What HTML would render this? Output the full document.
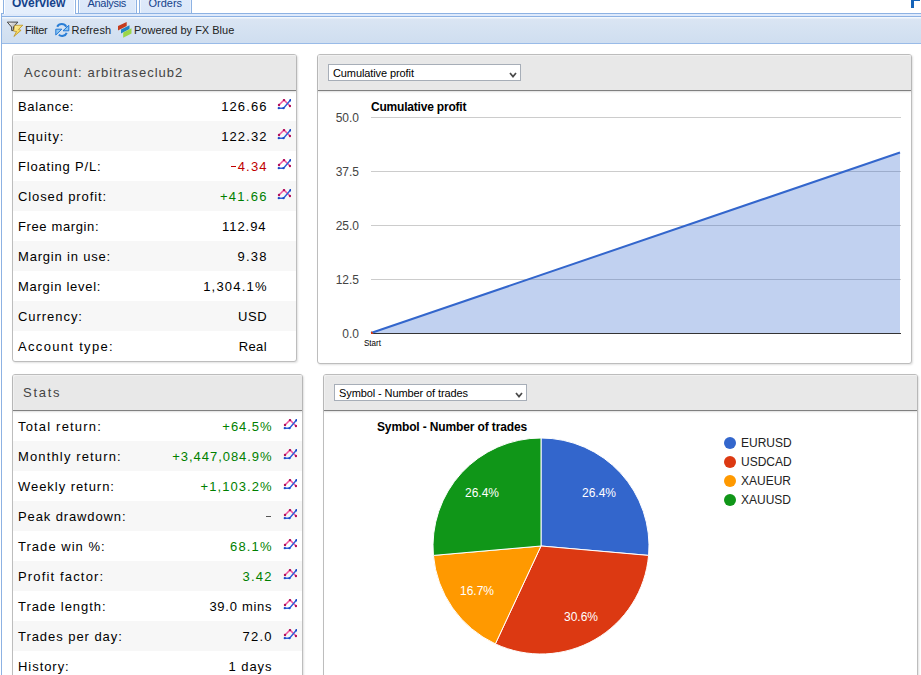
<!DOCTYPE html>
<html><head><meta charset="utf-8">
<style>
*{box-sizing:border-box;margin:0;padding:0}
html,body{width:921px;height:675px;overflow:hidden;background:#fff;position:relative;font-family:"Liberation Sans",sans-serif}
.abs{position:absolute}
.tab{position:absolute;top:-10px;height:24px;border:1px solid #8db2e3;border-top:none;background:linear-gradient(#e0ebfb,#dae7f9);box-shadow:inset 1px 0 0 #f0f6fe,inset -1px 0 0 #e8f0fc;font-size:11px;color:#15428b}
.tab span{position:absolute;top:7px;white-space:nowrap}
.panel{position:absolute;border:1px solid #bdbdbd;border-radius:3px;background:#fff;box-shadow:1px 1px 2px rgba(0,0,0,.12)}
.ph{position:absolute;left:0;right:0;top:0;height:36px;background:#e8e8e8;border-bottom:1px solid #808080;border-radius:2px 2px 0 0;box-shadow:0 1px 2px rgba(0,0,0,.13), inset 1px 1px 0 #f0f0f0}
.ph .t{position:absolute;left:11px;top:10px;font-size:13px;letter-spacing:.95px;color:#444;white-space:nowrap}
.row{position:absolute;left:0;right:0;height:30px;font-size:13px;letter-spacing:.95px;color:#000;white-space:nowrap}
.row.g{background:#f7f7f7}
.row .l{position:absolute;left:5px;top:8px}
.row .v{position:absolute;top:8px;text-align:right}
.pos{color:#007f00}
.neg{color:#c00000}
.ic{position:absolute;top:8px;width:14px;height:12px}
.sel{position:absolute;height:17px;background:#fff;border:1px solid #a7aeb8;font-size:11px;color:#000;white-space:nowrap}
.sel span{position:absolute;left:4px;top:2px;letter-spacing:-.1px}
.sel svg{position:absolute;right:3px;top:7px}
</style></head><body>

<!-- tabs -->
<div class="abs" style="left:1px;top:13px;width:920px;height:1px;background:#8db2e3"></div>
<div class="abs" style="left:1px;top:14px;width:920px;height:2px;background:#dfeafb"></div>
<div class="abs" style="left:1px;top:16px;width:920px;height:1px;background:#8db2e3"></div>
<div class="tab" style="left:3px;width:73px;height:24px;border-bottom:none;z-index:2;background:linear-gradient(#e8f0fc,#e4eefc);box-shadow:inset 1px 0 0 #fff,inset -1px 0 0 #fff"><span style="left:8px;font-weight:bold;font-size:12px;top:6px">Overview</span></div>
<div class="tab" style="left:78px;width:59px"><span style="left:8.5px;letter-spacing:-.3px">Analysis</span></div>
<div class="tab" style="left:139px;width:53px"><span style="left:8.5px">Orders</span></div>
<div class="abs" style="left:911px;top:0;width:3px;height:8px;background:#1563b8"></div>
<div class="abs" style="left:911px;top:0;width:9px;height:1px;background:#1563b8"></div>

<!-- toolbar -->
<div class="abs" style="left:1px;top:17px;width:920px;height:27px;background:linear-gradient(#f3f7fc 0px,#f3f7fc 1px,#dae5f3 2px,#cfdef0 26px);border-bottom:1px solid #99bbe8"></div>
<div class="abs" style="left:1px;top:13px;width:1px;height:662px;background:#8db2e3"></div>

<!-- toolbar items -->
<svg class="abs" style="left:7px;top:21px" width="17" height="17" viewBox="0 0 17 17">
  <defs><linearGradient id="fg" x1="0" y1="0" x2="1" y2="1"><stop offset="0" stop-color="#ffffff"/><stop offset="1" stop-color="#8a8a8a"/></linearGradient>
  <linearGradient id="bg1" x1="0" y1="0" x2="1" y2="1"><stop offset="0" stop-color="#fff6b0"/><stop offset="1" stop-color="#f0c020"/></linearGradient></defs>
  <path d="M0.3 1.1 L10.9 1.1 L6.5 6 L6.5 9.6 L4.7 9.6 L4.5 6 Z" fill="url(#fg)" stroke="#3a3a3a" stroke-width="0.9" stroke-linejoin="round"/>
  <path d="M7.8 4.4 L15.8 4.2 L11.5 8.5 L14.1 9.3 L6.9 15.5 L9.5 10.5 L6.6 10.1 Z" fill="url(#bg1)" stroke="#b88a10" stroke-width="0.7" stroke-linejoin="round"/>
</svg>
<div class="abs" style="left:25px;top:24px;font-size:11px;color:#222;letter-spacing:-.35px">Filter</div>

<svg class="abs" style="left:54px;top:22px" width="16" height="16" viewBox="0 0 16 16">
  <path d="M3.2 4.8 A5.2 5.2 0 0 1 12.3 4.8" fill="none" stroke="#2a7ed6" stroke-width="2"/>
  <path d="M14.8 3.3 L14.8 8.8 L9 8.8 Z" fill="#8ac6f4" stroke="#2277d4" stroke-width="1" stroke-linejoin="round"/>
  <path d="M12.7 10.8 A5 5 0 0 1 4.8 12.8" fill="none" stroke="#2a7ed6" stroke-width="2"/>
  <path d="M1.8 7.2 L7.8 7.2 L1.8 13 Z" fill="#8ac6f4" stroke="#2277d4" stroke-width="1" stroke-linejoin="round"/>
</svg>
<div class="abs" style="left:72px;top:24px;font-size:11px;color:#222;letter-spacing:.2px;margin-left:-.5px">Refresh</div>

<svg class="abs" style="left:116px;top:21px" width="17" height="18" viewBox="116 21 17 18">
  <path d="M118 26 L126.7 22 L126.7 26 L118 30.5 Z" fill="#c43c1e"/>
  <path d="M121 29.4 L129.5 25.3 L129.5 29 L121 33.6 Z" fill="#1f84c4"/>
  <path d="M123.2 32.6 L131.5 28.3 L131.5 33.6 L123.2 37.7 Z" fill="#9ad648"/>
</svg>
<div class="abs" style="left:134px;top:24px;font-size:11px;color:#222">Powered by FX Blue</div>

<!-- account panel -->
<div class="panel" style="left:12px;top:54px;width:285px;height:308px">
  <div class="ph"><div class="t" style="letter-spacing:1.02px">Account: arbitraseclub2</div></div>
  <div class="row" style="top:36px"><span class="l" style="letter-spacing:0.693px">Balance:</span><span class="v" style="right:28.32px;letter-spacing:1.130px">126.66</span><svg class="ic" style="right:5px" width="14" height="12" viewBox="0 0 14 12"><polyline points="2,6 7,1 13,7" fill="none" stroke="#f0559f" stroke-width="1.5"/><circle cx="2" cy="6" r="1.2" fill="#b0105a"/><circle cx="7" cy="1.1" r="1.2" fill="#b0105a"/><circle cx="13" cy="7" r="1.2" fill="#b0105a"/><polyline points="1.7,9.2 6.5,9.2 13.5,1" fill="none" stroke="#2d5fd8" stroke-width="1.4"/><circle cx="1.8" cy="9.2" r="1.15" fill="#1a48c8"/><circle cx="6.5" cy="9.2" r="1.15" fill="#1a48c8"/><circle cx="13.5" cy="1.2" r="1.2" fill="#1a48c8"/></svg></div>
  <div class="row g" style="top:66px"><span class="l" style="letter-spacing:0.950px">Equity:</span><span class="v" style="right:28.32px;letter-spacing:1.130px">122.32</span><svg class="ic" style="right:5px" width="14" height="12" viewBox="0 0 14 12"><polyline points="2,6 7,1 13,7" fill="none" stroke="#f0559f" stroke-width="1.5"/><circle cx="2" cy="6" r="1.2" fill="#b0105a"/><circle cx="7" cy="1.1" r="1.2" fill="#b0105a"/><circle cx="13" cy="7" r="1.2" fill="#b0105a"/><polyline points="1.7,9.2 6.5,9.2 13.5,1" fill="none" stroke="#2d5fd8" stroke-width="1.4"/><circle cx="1.8" cy="9.2" r="1.15" fill="#1a48c8"/><circle cx="6.5" cy="9.2" r="1.15" fill="#1a48c8"/><circle cx="13.5" cy="1.2" r="1.2" fill="#1a48c8"/></svg></div>
  <div class="row" style="top:96px"><span class="l" style="letter-spacing:0.800px">Floating P/L:</span><span class="v neg" style="right:28.28px;letter-spacing:1.175px"><i style='display:inline-block;width:5px;height:1px;background:currentColor;vertical-align:4px;margin-right:1.5px'></i>4.34</span><svg class="ic" style="right:5px" width="14" height="12" viewBox="0 0 14 12"><polyline points="2,6 7,1 13,7" fill="none" stroke="#f0559f" stroke-width="1.5"/><circle cx="2" cy="6" r="1.2" fill="#b0105a"/><circle cx="7" cy="1.1" r="1.2" fill="#b0105a"/><circle cx="13" cy="7" r="1.2" fill="#b0105a"/><polyline points="1.7,9.2 6.5,9.2 13.5,1" fill="none" stroke="#2d5fd8" stroke-width="1.4"/><circle cx="1.8" cy="9.2" r="1.15" fill="#1a48c8"/><circle cx="6.5" cy="9.2" r="1.15" fill="#1a48c8"/><circle cx="13.5" cy="1.2" r="1.2" fill="#1a48c8"/></svg></div>
  <div class="row g" style="top:126px"><span class="l" style="letter-spacing:0.881px">Closed profit:</span><span class="v pos" style="right:28.14px;letter-spacing:1.310px">+41.66</span><svg class="ic" style="right:5px" width="14" height="12" viewBox="0 0 14 12"><polyline points="2,6 7,1 13,7" fill="none" stroke="#f0559f" stroke-width="1.5"/><circle cx="2" cy="6" r="1.2" fill="#b0105a"/><circle cx="7" cy="1.1" r="1.2" fill="#b0105a"/><circle cx="13" cy="7" r="1.2" fill="#b0105a"/><polyline points="1.7,9.2 6.5,9.2 13.5,1" fill="none" stroke="#2d5fd8" stroke-width="1.4"/><circle cx="1.8" cy="9.2" r="1.15" fill="#1a48c8"/><circle cx="6.5" cy="9.2" r="1.15" fill="#1a48c8"/><circle cx="13.5" cy="1.2" r="1.2" fill="#1a48c8"/></svg></div>
  <div class="row" style="top:156px"><span class="l" style="letter-spacing:0.623px">Free margin:</span><span class="v" style="right:29.50px;letter-spacing:0.950px">112.94</span></div>
  <div class="row g" style="top:186px"><span class="l" style="letter-spacing:0.812px">Margin in use:</span><span class="v" style="right:28.20px;letter-spacing:1.250px">9.38</span></div>
  <div class="row" style="top:216px"><span class="l" style="letter-spacing:0.725px">Margin level:</span><span class="v" style="right:28.24px;letter-spacing:1.207px">1,304.1%</span></div>
  <div class="row g" style="top:246px"><span class="l" style="letter-spacing:0.950px">Currency:</span><span class="v" style="right:28.95px;letter-spacing:0.500px">USD</span></div>
  <div class="row" style="top:276px"><span class="l" style="letter-spacing:1.325px">Account type:</span><span class="v" style="right:29.10px;letter-spacing:0.350px">Real</span></div>
</div>

<!-- stats panel -->
<div class="panel" style="left:12px;top:374px;width:291px;height:320px">
  <div class="ph"><div class="t" style="left:10px;letter-spacing:1.75px">Stats</div></div>
  <div class="row" style="top:36px"><span class="l" style="letter-spacing:1.175px">Total return:</span><span class="v pos" style="right:29.50px;letter-spacing:0.950px">+64.5%</span><svg class="ic" style="right:5px" width="14" height="12" viewBox="0 0 14 12"><polyline points="2,6 7,1 13,7" fill="none" stroke="#f0559f" stroke-width="1.5"/><circle cx="2" cy="6" r="1.2" fill="#b0105a"/><circle cx="7" cy="1.1" r="1.2" fill="#b0105a"/><circle cx="13" cy="7" r="1.2" fill="#b0105a"/><polyline points="1.7,9.2 6.5,9.2 13.5,1" fill="none" stroke="#2d5fd8" stroke-width="1.4"/><circle cx="1.8" cy="9.2" r="1.15" fill="#1a48c8"/><circle cx="6.5" cy="9.2" r="1.15" fill="#1a48c8"/><circle cx="13.5" cy="1.2" r="1.2" fill="#1a48c8"/></svg></div>
  <div class="row g" style="top:66px"><span class="l" style="letter-spacing:1.143px">Monthly return:</span><span class="v pos" style="right:29.50px;letter-spacing:0.950px">+3,447,084.9%</span><svg class="ic" style="right:5px" width="14" height="12" viewBox="0 0 14 12"><polyline points="2,6 7,1 13,7" fill="none" stroke="#f0559f" stroke-width="1.5"/><circle cx="2" cy="6" r="1.2" fill="#b0105a"/><circle cx="7" cy="1.1" r="1.2" fill="#b0105a"/><circle cx="13" cy="7" r="1.2" fill="#b0105a"/><polyline points="1.7,9.2 6.5,9.2 13.5,1" fill="none" stroke="#2d5fd8" stroke-width="1.4"/><circle cx="1.8" cy="9.2" r="1.15" fill="#1a48c8"/><circle cx="6.5" cy="9.2" r="1.15" fill="#1a48c8"/><circle cx="13.5" cy="1.2" r="1.2" fill="#1a48c8"/></svg></div>
  <div class="row" style="top:96px"><span class="l" style="letter-spacing:0.950px">Weekly return:</span><span class="v pos" style="right:29.39px;letter-spacing:1.062px">+1,103.2%</span><svg class="ic" style="right:5px" width="14" height="12" viewBox="0 0 14 12"><polyline points="2,6 7,1 13,7" fill="none" stroke="#f0559f" stroke-width="1.5"/><circle cx="2" cy="6" r="1.2" fill="#b0105a"/><circle cx="7" cy="1.1" r="1.2" fill="#b0105a"/><circle cx="13" cy="7" r="1.2" fill="#b0105a"/><polyline points="1.7,9.2 6.5,9.2 13.5,1" fill="none" stroke="#2d5fd8" stroke-width="1.4"/><circle cx="1.8" cy="9.2" r="1.15" fill="#1a48c8"/><circle cx="6.5" cy="9.2" r="1.15" fill="#1a48c8"/><circle cx="13.5" cy="1.2" r="1.2" fill="#1a48c8"/></svg></div>
  <div class="row g" style="top:126px"><span class="l" style="letter-spacing:0.881px">Peak drawdown:</span><i style='position:absolute;right:31.5px;top:15px;width:5px;height:1px;background:#555'></i><svg class="ic" style="right:5px" width="14" height="12" viewBox="0 0 14 12"><polyline points="2,6 7,1 13,7" fill="none" stroke="#f0559f" stroke-width="1.5"/><circle cx="2" cy="6" r="1.2" fill="#b0105a"/><circle cx="7" cy="1.1" r="1.2" fill="#b0105a"/><circle cx="13" cy="7" r="1.2" fill="#b0105a"/><polyline points="1.7,9.2 6.5,9.2 13.5,1" fill="none" stroke="#2d5fd8" stroke-width="1.4"/><circle cx="1.8" cy="9.2" r="1.15" fill="#1a48c8"/><circle cx="6.5" cy="9.2" r="1.15" fill="#1a48c8"/><circle cx="13.5" cy="1.2" r="1.2" fill="#1a48c8"/></svg></div>
  <div class="row" style="top:156px"><span class="l" style="letter-spacing:1.032px">Trade win %:</span><span class="v pos" style="right:29.28px;letter-spacing:1.175px">68.1%</span><svg class="ic" style="right:5px" width="14" height="12" viewBox="0 0 14 12"><polyline points="2,6 7,1 13,7" fill="none" stroke="#f0559f" stroke-width="1.5"/><circle cx="2" cy="6" r="1.2" fill="#b0105a"/><circle cx="7" cy="1.1" r="1.2" fill="#b0105a"/><circle cx="13" cy="7" r="1.2" fill="#b0105a"/><polyline points="1.7,9.2 6.5,9.2 13.5,1" fill="none" stroke="#2d5fd8" stroke-width="1.4"/><circle cx="1.8" cy="9.2" r="1.15" fill="#1a48c8"/><circle cx="6.5" cy="9.2" r="1.15" fill="#1a48c8"/><circle cx="13.5" cy="1.2" r="1.2" fill="#1a48c8"/></svg></div>
  <div class="row g" style="top:186px"><span class="l" style="letter-spacing:1.157px">Profit factor:</span><span class="v pos" style="right:29.20px;letter-spacing:1.250px">3.42</span><svg class="ic" style="right:5px" width="14" height="12" viewBox="0 0 14 12"><polyline points="2,6 7,1 13,7" fill="none" stroke="#f0559f" stroke-width="1.5"/><circle cx="2" cy="6" r="1.2" fill="#b0105a"/><circle cx="7" cy="1.1" r="1.2" fill="#b0105a"/><circle cx="13" cy="7" r="1.2" fill="#b0105a"/><polyline points="1.7,9.2 6.5,9.2 13.5,1" fill="none" stroke="#2d5fd8" stroke-width="1.4"/><circle cx="1.8" cy="9.2" r="1.15" fill="#1a48c8"/><circle cx="6.5" cy="9.2" r="1.15" fill="#1a48c8"/><circle cx="13.5" cy="1.2" r="1.2" fill="#1a48c8"/></svg></div>
  <div class="row" style="top:216px"><span class="l" style="letter-spacing:0.950px">Trade length:</span><span class="v" style="right:29.72px;letter-spacing:0.725px">39.0 mins</span><svg class="ic" style="right:5px" width="14" height="12" viewBox="0 0 14 12"><polyline points="2,6 7,1 13,7" fill="none" stroke="#f0559f" stroke-width="1.5"/><circle cx="2" cy="6" r="1.2" fill="#b0105a"/><circle cx="7" cy="1.1" r="1.2" fill="#b0105a"/><circle cx="13" cy="7" r="1.2" fill="#b0105a"/><polyline points="1.7,9.2 6.5,9.2 13.5,1" fill="none" stroke="#2d5fd8" stroke-width="1.4"/><circle cx="1.8" cy="9.2" r="1.15" fill="#1a48c8"/><circle cx="6.5" cy="9.2" r="1.15" fill="#1a48c8"/><circle cx="13.5" cy="1.2" r="1.2" fill="#1a48c8"/></svg></div>
  <div class="row g" style="top:246px"><span class="l" style="letter-spacing:0.950px">Trades per day:</span><span class="v" style="right:29.20px;letter-spacing:1.250px">72.0</span><svg class="ic" style="right:5px" width="14" height="12" viewBox="0 0 14 12"><polyline points="2,6 7,1 13,7" fill="none" stroke="#f0559f" stroke-width="1.5"/><circle cx="2" cy="6" r="1.2" fill="#b0105a"/><circle cx="7" cy="1.1" r="1.2" fill="#b0105a"/><circle cx="13" cy="7" r="1.2" fill="#b0105a"/><polyline points="1.7,9.2 6.5,9.2 13.5,1" fill="none" stroke="#2d5fd8" stroke-width="1.4"/><circle cx="1.8" cy="9.2" r="1.15" fill="#1a48c8"/><circle cx="6.5" cy="9.2" r="1.15" fill="#1a48c8"/><circle cx="13.5" cy="1.2" r="1.2" fill="#1a48c8"/></svg></div>
  <div class="row" style="top:276px"><span class="l" style="letter-spacing:0.950px">History:</span><span class="v" style="right:29.50px;letter-spacing:0.950px">1 days</span></div>
</div>

<!-- chart panel -->
<div class="panel" style="left:317px;top:54px;width:595px;height:310px">
  <div class="ph"><div class="sel" style="left:10px;top:9px;width:193px"><span>Cumulative profit</span><svg width="8" height="6" viewBox="0 0 8 6"><path d="M1 1 L4 4.6 L7 1" fill="none" stroke="#4a4a4a" stroke-width="1.7"/></svg></div></div>
</div>
<svg class="abs" style="left:0;top:0" width="921" height="675" viewBox="0 0 921 675">
<text x="371" y="111" font-family="Liberation Sans" font-size="12" font-weight="bold" fill="#000" letter-spacing="-0.2">Cumulative profit</text>
<rect x="371" y="117" width="530" height="1" fill="#cccccc"/>
<text x="359" y="122" text-anchor="end" font-family="Liberation Sans" font-size="12" fill="#444">50.0</text>
<rect x="371" y="171" width="530" height="1" fill="#cccccc"/>
<text x="359" y="176" text-anchor="end" font-family="Liberation Sans" font-size="12" fill="#444">37.5</text>
<rect x="371" y="225" width="530" height="1" fill="#cccccc"/>
<text x="359" y="230" text-anchor="end" font-family="Liberation Sans" font-size="12" fill="#444">25.0</text>
<rect x="371" y="279" width="530" height="1" fill="#cccccc"/>
<text x="359" y="284" text-anchor="end" font-family="Liberation Sans" font-size="12" fill="#444">12.5</text>
<text x="359" y="338" text-anchor="end" font-family="Liberation Sans" font-size="12" fill="#444">0.0</text>
<polygon points="371,333 900,152.5 900,333" fill="#3366cc" fill-opacity="0.3"/>
<rect x="371" y="333" width="530" height="1" fill="#333"/>
<line x1="371" y1="333" x2="900" y2="152.5" stroke="#3366cc" stroke-width="2"/>
<polygon points="371,331 371,334 373.5,334" fill="#dc3912"/><rect x="371" y="332" width="1.5" height="2" fill="#dc3912"/>
<text x="364" y="346" font-family="Liberation Sans" font-size="9" fill="#000" textLength="17" lengthAdjust="spacingAndGlyphs">Start</text>
</svg>

<!-- pie panel -->
<div class="panel" style="left:323px;top:374px;width:595px;height:320px">
  <div class="ph"><div class="sel" style="left:10px;top:9px;width:193px"><span>Symbol - Number of trades</span><svg width="8" height="6" viewBox="0 0 8 6"><path d="M1 1 L4 4.6 L7 1" fill="none" stroke="#4a4a4a" stroke-width="1.7"/></svg></div></div>
</div>
<svg class="abs" style="left:0;top:0" width="921" height="675" viewBox="0 0 921 675">
<text x="377" y="431" font-family="Liberation Sans" font-size="12" font-weight="bold" fill="#000" letter-spacing="-0.13">Symbol - Number of trades</text>
<path d="M541.00 546.00 L541.00 438.00 A108 108 0 0 1 648.59 555.41 Z" fill="#3366cc" stroke="#fff" stroke-width="1"/>
<path d="M541.00 546.00 L648.59 555.41 A108 108 0 0 1 495.36 643.88 Z" fill="#dc3912" stroke="#fff" stroke-width="1"/>
<path d="M541.00 546.00 L495.36 643.88 A108 108 0 0 1 433.41 555.41 Z" fill="#ff9900" stroke="#fff" stroke-width="1"/>
<path d="M541.00 546.00 L433.41 555.41 A108 108 0 0 1 541.00 438.00 Z" fill="#109618" stroke="#fff" stroke-width="1"/>
<text x="599" y="497" text-anchor="middle" font-family="Liberation Sans" font-size="12" fill="#fff">26.4%</text>
<text x="581" y="621" text-anchor="middle" font-family="Liberation Sans" font-size="12" fill="#fff">30.6%</text>
<text x="477" y="595" text-anchor="middle" font-family="Liberation Sans" font-size="12" fill="#fff">16.7%</text>
<text x="482" y="497" text-anchor="middle" font-family="Liberation Sans" font-size="12" fill="#fff">26.4%</text>
<circle cx="730" cy="443" r="6" fill="#3366cc"/>
<text x="741" y="447" font-family="Liberation Sans" font-size="12" fill="#222">EURUSD</text>
<circle cx="730" cy="462" r="6" fill="#dc3912"/>
<text x="741" y="466" font-family="Liberation Sans" font-size="12" fill="#222">USDCAD</text>
<circle cx="730" cy="481" r="6" fill="#ff9900"/>
<text x="741" y="485" font-family="Liberation Sans" font-size="12" fill="#222">XAUEUR</text>
<circle cx="730" cy="500" r="6" fill="#109618"/>
<text x="741" y="504" font-family="Liberation Sans" font-size="12" fill="#222">XAUUSD</text>
</svg>

</body></html>
